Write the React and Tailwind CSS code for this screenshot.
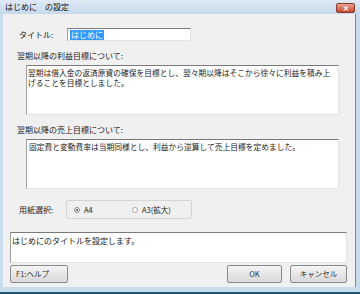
const jp = "font-['Noto_Sans_CJK_JP','Noto_Sans',sans-serif]";

function Field({ children, className = "" }) {
  return (
    <div
      className={`bg-white border border-[#a0a0a0] border-t-[#7a7a7a] border-r-[#e3e3e3] border-b-[#e3e3e3] ${className}`}
    >
      {children}
    </div>
  );
}

function Button({ children, className = "" }) {
  return (
    <div
      className={`h-[18px] flex items-center border border-[#8a8a8a] rounded-[2px] bg-gradient-to-b from-[#f4f4f4] to-[#d9d9d9] text-[7.5px] text-[#333] ${className}`}
    >
      {children}
    </div>
  );
}

export default function App() {
  return (
    <div
      className={`w-[360px] h-[294px] flex flex-col bg-[#c9dcee] ${jp} leading-none text-[#1a1a1a]`}
    >
      <div className="h-[14px] flex items-center justify-between pl-[5px] pr-[5px] bg-gradient-to-b from-[#dfeaf6] to-[#c6d9ec]">
        <span className="text-[8px] text-[#111]">はじめに　の設定</span>
        <div className="w-[19px] h-[10px] mt-[2px] rounded-[2px] bg-gradient-to-b from-[#e8a292] to-[#c5442c] border border-[#8a3a2a] flex items-center justify-center text-white text-[7px] font-bold">
          ✕
        </div>
      </div>

      <div className="flex-1 flex pl-[3px] pr-[4px] pb-[5px] border-b-[2px] border-[#1f5770]">
        <div className="flex-1 bg-[#f0f0f0] border-r border-[#5d91b3] flex flex-col">
          <div className="flex items-center pl-[16px] pt-[13px] h-[28px]">
            <span className="text-[8px] w-[48px]">タイトル:</span>
            <Field className="w-[124px] h-[13px] flex items-center pl-[2px]">
              <span className="bg-[#3399ff] text-white text-[8px] px-[1px] leading-[10px]">はじめに</span>
            </Field>
          </div>

          <div className="pl-[14px] pt-[10px] text-[8px]">翌期以降の利益目標について:</div>
          <Field className="ml-[23px] mr-[16px] mt-[5px] h-[50px] pl-[1px] pt-[2px]">
            <p className="text-[7.75px] leading-[10px]">
              翌期は借入金の返済原資の確保を目標とし、翌々期以降はそこから徐々に利益を積み上
              <br />
              げることを目標としました。
            </p>
          </Field>

          <div className="pl-[14px] pt-[11px] text-[8px]">翌期以降の売上目標について:</div>
          <Field className="ml-[23px] mr-[16px] mt-[5px] h-[50px] px-[2px] pt-[2px]">
            <p className="text-[7.75px] leading-[10px]">
              固定費と変動費率は当期同様とし、利益から逆算して売上目標を定めました。
            </p>
          </Field>

          <div className="flex items-center pl-[16px] pt-[11px]">
            <span className="text-[8px] w-[47px]">用紙選択:</span>
            <div className="w-[126px] h-[19px] border border-[#d5d5d5] rounded-[2px] flex items-center text-[7.5px]">
              <div className="flex items-center gap-[4px] ml-[7px] w-[58px]">
                <span className="w-[6px] h-[6px] rounded-full border border-[#888] bg-white flex items-center justify-center">
                  <span className="w-[2px] h-[2px] rounded-full bg-[#333]" />
                </span>
                <span>A4</span>
              </div>
              <div className="flex items-center gap-[4px]">
                <span className="w-[6px] h-[6px] rounded-full border border-[#aaa] bg-white" />
                <span>A3(拡大)</span>
              </div>
            </div>
          </div>

          <Field className="ml-[7px] mr-[8px] mt-[13px] h-[31px] px-[1px] pt-[4px]">
            <p className="text-[8px]">はじめにのタイトルを設定します。</p>
          </Field>

          <div className="flex items-center ml-[7px] mr-[8px] mt-[2px]">
            <Button className="w-[58px] pl-[5px]">F1:ヘルプ</Button>
            <div className="flex-1" />
            <Button className="w-[55px] justify-center">OK</Button>
            <Button className="w-[57px] ml-[8px] justify-center">キャンセル</Button>
          </div>
        </div>
      </div>
    </div>
  );
}
